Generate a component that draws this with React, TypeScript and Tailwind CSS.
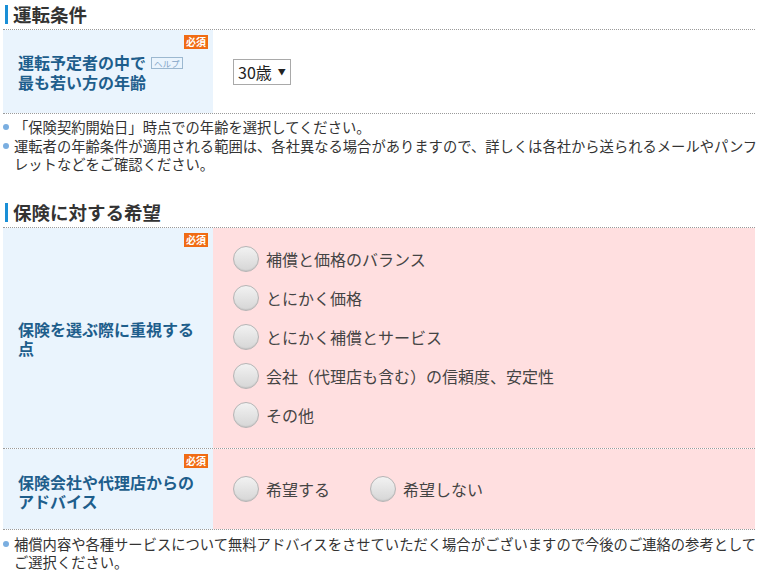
import React from "react";

const font = { fontFamily: '"Noto Sans CJK JP", "Noto Sans", sans-serif' };

function Heading({ children }: { children: React.ReactNode }) {
  return (
    <div className="flex items-center h-[30px] border-b border-dotted border-[#9a9a9a] pl-[2px]">
      <div className="w-[3px] h-[19px] bg-[#1a8fd6] mr-[5px]" />
      <div className="text-[18.5px] font-bold text-[#333] leading-none">{children}</div>
    </div>
  );
}

function Badge() {
  return (
    <div className="absolute top-[5px] right-[5px] bg-[#f06b14] text-white text-[10px] leading-[14px] px-[2px] font-bold">
      必須
    </div>
  );
}

function Radio({ label }: { label: string }) {
  return (
    <div className="flex items-center">
      <div className="w-[26px] h-[26px] rounded-full border border-[#b5b5b5] bg-gradient-to-b from-[#f2f2f2] to-[#d6d6d6] shadow-[inset_0_-1px_1px_rgba(0,0,0,0.08)]" />
      <span className="ml-[7px] text-[16px] text-[#444] leading-none">{label}</span>
    </div>
  );
}

function Note({ children }: { children: React.ReactNode }) {
  return (
    <div className="flex text-[14.3px] text-[#333] leading-[18px]">
      <div className="w-[11px] shrink-0 pt-[6px]">
        <div className="w-[6px] h-[6px] rounded-full bg-[#7aaee0]" />
      </div>
      <div className="whitespace-nowrap">{children}</div>
    </div>
  );
}

export default function App() {
  return (
    <div className="w-[759px] h-[578px] bg-white overflow-hidden px-[3px] pr-[4px]" style={font}>
      <Heading>運転条件</Heading>
      <div className="flex h-[84px] border-b border-dotted border-[#9a9a9a]">
        <div className="relative w-[210px] bg-[#eaf4fd] flex items-center pl-[15px] pr-[16px]">
          <Badge />
          <div className="text-[16px] font-bold text-[#1e5e8c] leading-[20px]">
            運転予定者の中で
            <span className="inline-block align-[2px] ml-[5px] border border-[#9cb8d0] text-[#7fa3c6] text-[8.5px] leading-[10px] px-[2px] font-normal">ヘルプ</span>
            <br />
            最も若い方の年齢
          </div>
        </div>
        <div className="flex-1 flex items-center pl-[20px]">
          <div className="flex items-center h-[26px] border border-[#a9a9a9] pl-[4px] pr-[4px] text-[16px] text-[#222]">
            <span className="leading-none">30歳</span>
            <span className="ml-[6px] text-[8px] leading-none">▼</span>
          </div>
        </div>
      </div>
      <div className="pt-[4px] flex flex-col gap-[1px]">
        <Note>「保険契約開始日」時点での年齢を選択してください。</Note>
        <Note>
          運転者の年齢条件が適用される範囲は、各社異なる場合がありますので、詳しくは各社から送られるメールやパンフ
          <br />
          レットなどをご確認ください。
        </Note>
      </div>
      <div className="h-[25px]" />
      <Heading>保険に対する希望</Heading>
      <div className="flex h-[221px] border-b border-dotted border-[#9a9a9a]">
        <div className="relative w-[210px] bg-[#eaf4fd] flex items-center pl-[15px] pr-[16px]">
          <Badge />
          <div className="text-[16px] font-bold text-[#1e5e8c] leading-[19px] pt-[2px]">保険を選ぶ際に重視する点</div>
        </div>
        <div className="flex-1 bg-[#ffdfe0] flex flex-col pl-[20px] pt-[11px]">
          {["補償と価格のバランス", "とにかく価格", "とにかく補償とサービス", "会社（代理店も含む）の信頼度、安定性", "その他"].map((l) => (
            <div key={l} className="h-[39px] flex items-center">
              <Radio label={l} />
            </div>
          ))}
        </div>
      </div>
      <div className="flex h-[81px] border-b border-dotted border-[#9a9a9a]">
        <div className="relative w-[210px] bg-[#eaf4fd] flex items-center pl-[15px] pr-[16px]">
          <Badge />
          <div className="text-[16px] font-bold text-[#1e5e8c] leading-[19px] pt-[6px]">保険会社や代理店からのアドバイス</div>
        </div>
        <div className="flex-1 bg-[#ffdfe0] flex items-center pl-[20px] gap-[40px]">
          <Radio label="希望する" />
          <Radio label="希望しない" />
        </div>
      </div>
      <div className="pt-[5px]">
        <Note>
          補償内容や各種サービスについて無料アドバイスをさせていただく場合がございますので今後のご連絡の参考として
          <br />
          ご選択ください。
        </Note>
      </div>
    </div>
  );
}
